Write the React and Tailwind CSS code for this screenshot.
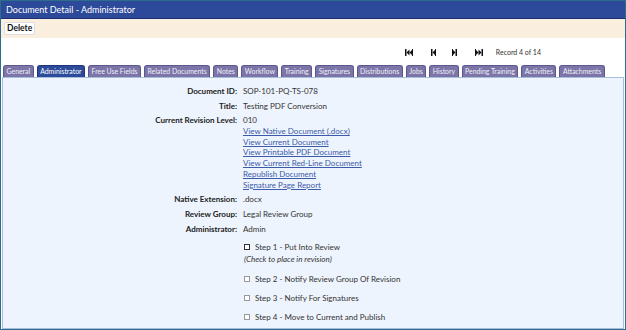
import React from 'react';

const tabs = [
  'General',
  'Administrator',
  'Free Use Fields',
  'Related Documents',
  'Notes',
  'Workflow',
  'Training',
  'Signatures',
  'Distributions',
  'Jobs',
  'History',
  'Pending Training',
  'Activities',
  'Attachments',
];

const links = [
  'View Native Document (.docx)',
  'View Current Document',
  'View Printable PDF Document',
  'View Current Red-Line Document',
  'Republish Document',
  'Signature Page Report',
];

const NavIcon = ({ type }) => {
  // bar + arrow glyphs for first / prev / next / last
  const double = type === 'first' || type === 'last';
  const flip = type === 'next' || type === 'last';
  return (
    <svg width={double ? 8 : 5} height="7" viewBox={double ? '0 0 8 7' : '0 0 5 7'} className={flip ? '-scale-x-100' : ''}>
      <rect x="0" y="0" width="1.5" height="7" fill="#111" />
      <path d="M1.5 3.5 L4.5 0.5 L4.5 6.5 Z" fill="#111" />
      {double && <path d="M4.5 3.5 L7.5 0.5 L7.5 6.5 Z" fill="#111" />}
      <rect x={double ? 7 : 4} y="0" width="1" height="7" fill="#111" />
    </svg>
  );
};

const Row = ({ label, children, className = 'h-[15px]' }) => (
  <div className={`flex items-center ${className}`}>
    <div className="w-[240px] shrink-0 text-right font-bold text-[8px] text-[#222] pr-[6px]">{label}</div>
    <div className="text-[8px] text-[#333]">{children}</div>
  </div>
);

const Step = ({ label, active, className }) => (
  <div className={`flex items-center pl-[241px] ${className}`}>
    <span className={`w-[6px] h-[6px] mr-[5px] bg-white border ${active ? 'border-[#333]' : 'border-[#999]'}`} />
    <span className="text-[8px] text-[#333]">{label}</span>
  </div>
);

export default function App() {
  return (
    <div
      className="w-[626px] h-[330px] border border-[#2d6d8c] bg-white flex flex-col overflow-hidden"
      style={{ fontFamily: 'Lato, "Open Sans", sans-serif' }}
    >
      <div className="h-[18px] shrink-0 bg-[#2d4a9a] border-b border-[#1c2f6c] flex items-center px-[5px]">
        <span className="text-white text-[9px]">Document Detail - Administrator</span>
      </div>
      <div className="h-[19px] shrink-0 bg-[#faefdf] flex items-center px-[3px]">
        <button className="bg-white border border-[#ddd] rounded-[2px] px-[2px] h-[13px] text-[8.5px] font-bold text-[#111] leading-none">
          Delete
        </button>
      </div>
      <div className="h-[27px] shrink-0 flex items-center justify-end pr-[84px] pt-[2px]">
        <div className="flex items-center">
          <NavIcon type="first" />
          <span className="ml-[18px]"><NavIcon type="prev" /></span>
          <span className="ml-[16px]"><NavIcon type="next" /></span>
          <span className="ml-[18px]"><NavIcon type="last" /></span>
          <span className="ml-[13px] text-[7px] text-[#333] whitespace-nowrap">Record 4 of 14</span>
        </div>
      </div>
      <div className="h-[12px] shrink-0 flex items-end gap-[3px] pl-[2px]">
        {tabs.map((t) => (
          <div
            key={t}
            className={`h-[12px] px-[2.5px] rounded-t-[3px] border border-b-0 text-[6.9px] leading-[11px] whitespace-nowrap ${
              t === 'Administrator'
                ? 'bg-[#2c4b9b] border-[#1f377a] text-white'
                : 'bg-[#7b75a8] border-[#5d5790] text-[#f1f0f7]'
            }`}
          >
            {t}
          </div>
        ))}
      </div>
      <div className="flex-1 bg-[#eef4fd] border border-[#a9bedc] mx-[1px] pt-[5px]">
        <Row label="Document ID:">SOP-101-PQ-TS-078</Row>
        <Row label="Title:">Testing PDF Conversion</Row>
        <div className="flex">
          <div className="w-[240px] shrink-0 text-right font-bold text-[8px] text-[#222] pr-[6px] leading-[11px] pt-[2px]">
            Current Revision Level:
          </div>
          <div className="flex flex-col text-[8px] leading-[10.8px] pt-[2px]">
            <span className="text-[#333]">010</span>
            {links.map((l) => (
              <span key={l} className="text-[#3b5ba8] underline">{l}</span>
            ))}
          </div>
        </div>
        <Row label="Native Extension:" className="h-[15px] mt-[1px]">.docx</Row>
        <Row label="Review Group:">Legal Review Group</Row>
        <Row label="Administrator:">Admin</Row>
        <Step label="Step 1 - Put Into Review" active className="mt-[5px] h-[11px]" />
        <div className="pl-[241px] text-[8px] italic text-[#333] leading-[12px]">(Check to place in revision)</div>
        <Step label="Step 2 - Notify Review Group Of Revision" className="mt-[9px] h-[11px]" />
        <Step label="Step 3 - Notify For Signatures" className="mt-[8px] h-[11px]" />
        <Step label="Step 4 - Move to Current and Publish" className="mt-[8px] h-[11px]" />
      </div>
    </div>
  );
}
